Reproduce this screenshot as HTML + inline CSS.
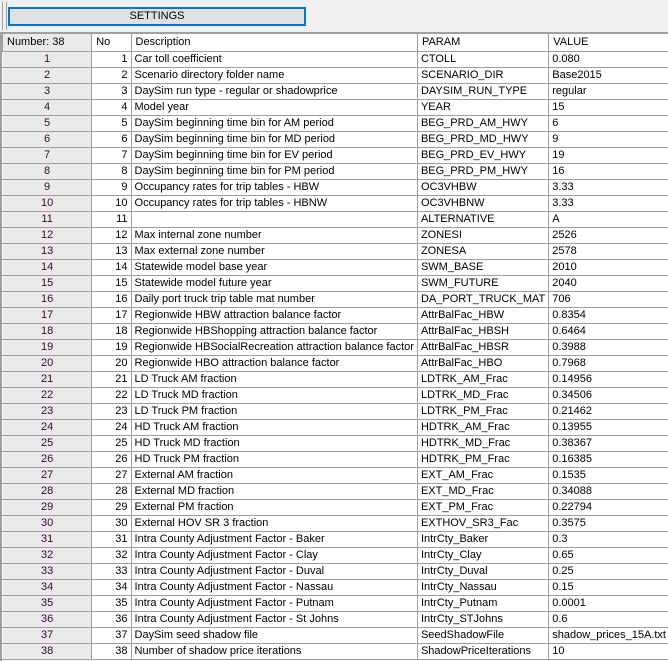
<!DOCTYPE html>
<html><head><style>
body{margin:0;width:668px;height:660px;background:#f0f0f0;font-family:"Liberation Sans",Arial,sans-serif;font-size:11px;overflow:hidden;position:relative}
.btn{position:absolute;left:8px;top:7px;width:296px;height:17px;border:1px solid #0078d7;box-shadow:inset 0 0 0 1px #0078d7;background:#e1e1e1;text-align:center;line-height:17px;font-size:11px;color:#000}
.grip{position:absolute;left:2px;top:2px;width:3px;height:28px;border-left:1px solid #a0a0a0;border-right:1px solid #a0a0a0}
.grid{position:absolute;left:0;top:32px;width:668px;height:628px;background:#fff;border-top:1px solid #a0a0a0;border-left:2px solid #a0a0a0}
table{border-collapse:collapse;table-layout:fixed;position:absolute;left:0;top:0}
td{height:15px;padding:0 3px;border:1px solid #a0a0a0;white-space:nowrap;overflow:hidden;line-height:15px;color:#000}
tr.h td{background:#fff;border-color:#a0a0a0;padding-left:4px;height:16px;line-height:17px}
td.rh{background:#eaeaea;color:#400040;text-align:center;border-color:#fff #a0a0a0 #a0a0a0 #fff}
tr.h td.rh{background:#eaeaea;text-align:left;color:#000}
td.no{text-align:right}
</style></head><body>
<div class="grip"></div>
<div class="btn">SETTINGS</div>
<div class="grid"><table>
<colgroup><col style="width:93px"><col style="width:42px"><col style="width:282px"><col style="width:130px"><col style="width:118px"></colgroup>
<tr class="h"><td class="rh">Number: 38</td><td>No</td><td>Description</td><td>PARAM</td><td>VALUE</td></tr>
<tr><td class="rh">1</td><td class="no">1</td><td>Car toll coefficient</td><td>CTOLL</td><td>0.080</td></tr>
<tr><td class="rh">2</td><td class="no">2</td><td>Scenario directory folder name</td><td>SCENARIO_DIR</td><td>Base2015</td></tr>
<tr><td class="rh">3</td><td class="no">3</td><td>DaySim run type - regular or shadowprice</td><td>DAYSIM_RUN_TYPE</td><td>regular</td></tr>
<tr><td class="rh">4</td><td class="no">4</td><td>Model year</td><td>YEAR</td><td>15</td></tr>
<tr><td class="rh">5</td><td class="no">5</td><td>DaySim beginning time bin for AM period</td><td>BEG_PRD_AM_HWY</td><td>6</td></tr>
<tr><td class="rh">6</td><td class="no">6</td><td>DaySim beginning time bin for MD period</td><td>BEG_PRD_MD_HWY</td><td>9</td></tr>
<tr><td class="rh">7</td><td class="no">7</td><td>DaySim beginning time bin for EV period</td><td>BEG_PRD_EV_HWY</td><td>19</td></tr>
<tr><td class="rh">8</td><td class="no">8</td><td>DaySim beginning time bin for PM period</td><td>BEG_PRD_PM_HWY</td><td>16</td></tr>
<tr><td class="rh">9</td><td class="no">9</td><td>Occupancy rates for trip tables - HBW</td><td>OC3VHBW</td><td>3.33</td></tr>
<tr><td class="rh">10</td><td class="no">10</td><td>Occupancy rates for trip tables - HBNW</td><td>OC3VHBNW</td><td>3.33</td></tr>
<tr><td class="rh">11</td><td class="no">11</td><td></td><td>ALTERNATIVE</td><td>A</td></tr>
<tr><td class="rh">12</td><td class="no">12</td><td>Max internal zone number</td><td>ZONESI</td><td>2526</td></tr>
<tr><td class="rh">13</td><td class="no">13</td><td>Max external zone number</td><td>ZONESA</td><td>2578</td></tr>
<tr><td class="rh">14</td><td class="no">14</td><td>Statewide model base year</td><td>SWM_BASE</td><td>2010</td></tr>
<tr><td class="rh">15</td><td class="no">15</td><td>Statewide model future year</td><td>SWM_FUTURE</td><td>2040</td></tr>
<tr><td class="rh">16</td><td class="no">16</td><td>Daily port truck trip table mat number</td><td>DA_PORT_TRUCK_MAT</td><td>706</td></tr>
<tr><td class="rh">17</td><td class="no">17</td><td>Regionwide HBW attraction balance factor</td><td>AttrBalFac_HBW</td><td>0.8354</td></tr>
<tr><td class="rh">18</td><td class="no">18</td><td>Regionwide HBShopping attraction balance factor</td><td>AttrBalFac_HBSH</td><td>0.6464</td></tr>
<tr><td class="rh">19</td><td class="no">19</td><td>Regionwide HBSocialRecreation attraction balance factor</td><td>AttrBalFac_HBSR</td><td>0.3988</td></tr>
<tr><td class="rh">20</td><td class="no">20</td><td>Regionwide HBO attraction balance factor</td><td>AttrBalFac_HBO</td><td>0.7968</td></tr>
<tr><td class="rh">21</td><td class="no">21</td><td>LD Truck AM fraction</td><td>LDTRK_AM_Frac</td><td>0.14956</td></tr>
<tr><td class="rh">22</td><td class="no">22</td><td>LD Truck MD fraction</td><td>LDTRK_MD_Frac</td><td>0.34506</td></tr>
<tr><td class="rh">23</td><td class="no">23</td><td>LD Truck PM fraction</td><td>LDTRK_PM_Frac</td><td>0.21462</td></tr>
<tr><td class="rh">24</td><td class="no">24</td><td>HD Truck AM fraction</td><td>HDTRK_AM_Frac</td><td>0.13955</td></tr>
<tr><td class="rh">25</td><td class="no">25</td><td>HD Truck MD fraction</td><td>HDTRK_MD_Frac</td><td>0.38367</td></tr>
<tr><td class="rh">26</td><td class="no">26</td><td>HD Truck PM fraction</td><td>HDTRK_PM_Frac</td><td>0.16385</td></tr>
<tr><td class="rh">27</td><td class="no">27</td><td>External AM fraction</td><td>EXT_AM_Frac</td><td>0.1535</td></tr>
<tr><td class="rh">28</td><td class="no">28</td><td>External MD fraction</td><td>EXT_MD_Frac</td><td>0.34088</td></tr>
<tr><td class="rh">29</td><td class="no">29</td><td>External PM fraction</td><td>EXT_PM_Frac</td><td>0.22794</td></tr>
<tr><td class="rh">30</td><td class="no">30</td><td>External HOV SR 3 fraction</td><td>EXTHOV_SR3_Fac</td><td>0.3575</td></tr>
<tr><td class="rh">31</td><td class="no">31</td><td>Intra County Adjustment Factor - Baker</td><td>IntrCty_Baker</td><td>0.3</td></tr>
<tr><td class="rh">32</td><td class="no">32</td><td>Intra County Adjustment Factor - Clay</td><td>IntrCty_Clay</td><td>0.65</td></tr>
<tr><td class="rh">33</td><td class="no">33</td><td>Intra County Adjustment Factor - Duval</td><td>IntrCty_Duval</td><td>0.25</td></tr>
<tr><td class="rh">34</td><td class="no">34</td><td>Intra County Adjustment Factor - Nassau</td><td>IntrCty_Nassau</td><td>0.15</td></tr>
<tr><td class="rh">35</td><td class="no">35</td><td>Intra County Adjustment Factor - Putnam</td><td>IntrCty_Putnam</td><td>0.0001</td></tr>
<tr><td class="rh">36</td><td class="no">36</td><td>Intra County Adjustment Factor - St Johns</td><td>IntrCty_STJohns</td><td>0.6</td></tr>
<tr><td class="rh">37</td><td class="no">37</td><td>DaySim seed shadow file</td><td>SeedShadowFile</td><td>shadow_prices_15A.txt</td></tr>
<tr><td class="rh">38</td><td class="no">38</td><td>Number of shadow price iterations</td><td>ShadowPriceIterations</td><td>10</td></tr>
</table></div>
</body></html>
